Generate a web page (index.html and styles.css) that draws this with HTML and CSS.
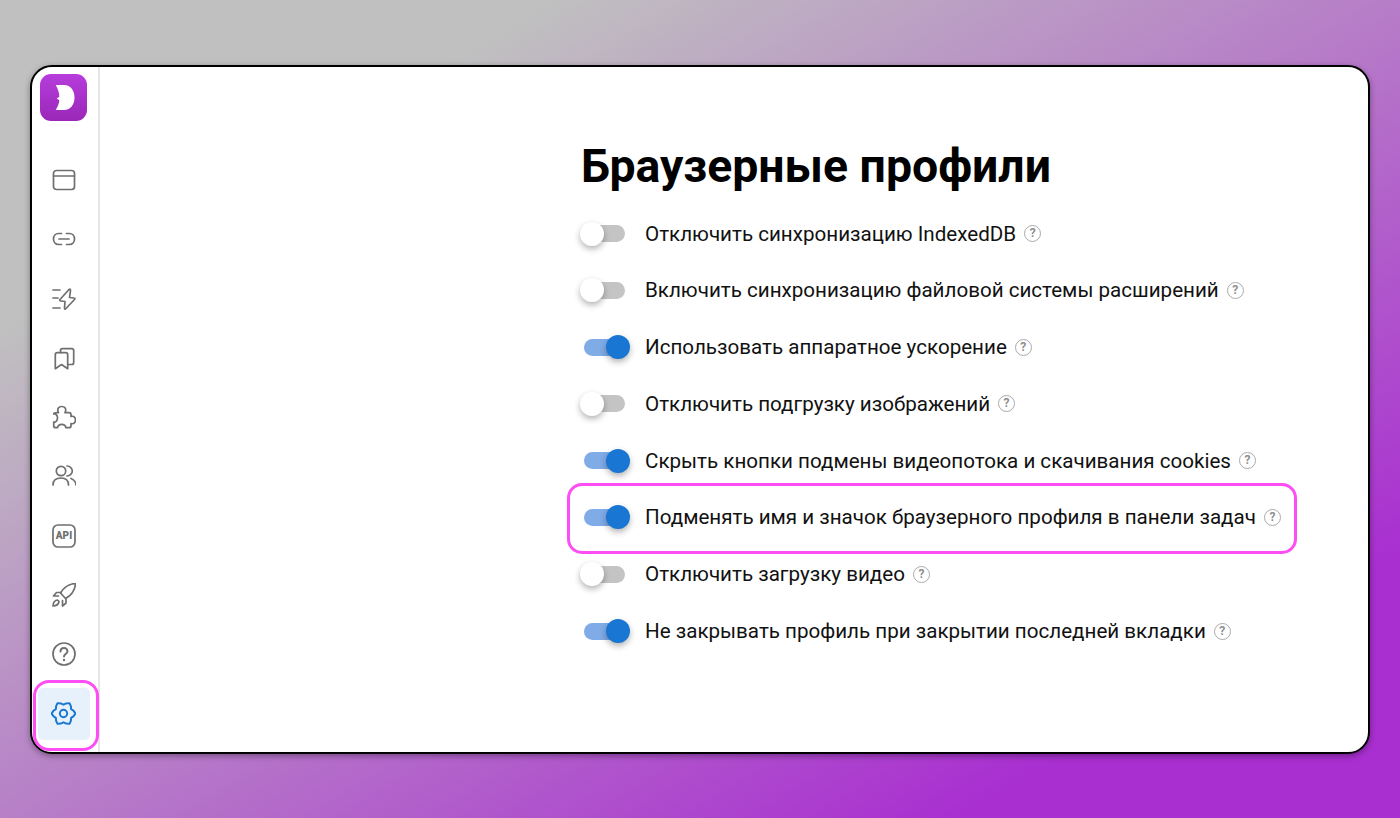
FILE: index.html
```html
<!DOCTYPE html>
<html lang="en">
<head>
  <meta charset="UTF-8">
  <title>Браузерные профили</title>
  <link rel="stylesheet" href="styles.css">
</head>
<body>

<div class="window">
  <div class="sidebar">
    <div class="logo">
      <svg width="47" height="47" viewBox="0 0 47 47"><path d="M15.700 11 H24 C31 11 34.500 17 34.500 23.500 C34.500 30 31 36 24 36 H15.700 C18 32 19.300 29 19.300 26.300 L16.700 24.500 L19.300 22.700 C19.300 19 18 15 15.700 11 Z" fill="#fff"/></svg>
    </div>
    <div class="nav">
      <div class="nav-item">
        <svg class="icon" viewBox="0 0 24 24"><rect x="1.500" y="2.500" width="21" height="19" rx="3"/><path d="M1.500 8 H22.500"/></svg>
      </div>
      <div class="nav-item">
        <svg class="icon" viewBox="0 0 24 24"><path d="M9.500 6.500 H6.500 C3.500 6.500 1.500 9 1.500 12 C1.500 15 3.500 17.500 6.500 17.500 H9.500"/><path d="M14.500 6.500 H17.500 C20.500 6.500 22.500 9 22.500 12 C22.500 15 20.500 17.500 17.500 17.500 H14.500"/><path d="M7 12 H17"/></svg>
      </div>
      <div class="nav-item">
        <svg class="icon" viewBox="0 0 24 24"><path d="M1 3 H8 M1 11 H6 M1 21 H8"/><path d="M17 2.500 L8 12.500 Q7 14 9 14 L13 14.500 L12.500 21 Q12.500 23 14 21.500 L22.500 12.500 Q23.500 11 22 11 L17.500 10.500 L18.500 3.500 Q18.500 1.500 17 2.500 Z"/></svg>
      </div>
      <div class="nav-item">
        <svg class="icon" viewBox="0 0 24 24"><path d="M8.500 6.700 V4.700 Q8.500 2.700 10.500 2.700 H19.700 Q21.700 2.700 21.700 4.700 V16.500 Q21.700 18.500 19.700 18.500 H16"/><path d="M5.300 6.700 H13.700 Q15.700 6.700 15.700 8.700 V22.700 L9.500 18.500 L3.300 22.700 V8.700 Q3.300 6.700 5.300 6.700 Z"/></svg>
      </div>
      <div class="nav-item">
        <svg class="icon" viewBox="0 0 24 24"><path d="M5 7.700 H6.500 C4.500 3.500 7 1.500 9.700 1.500 C12.500 1.500 15 3.500 13 7.700 H17 Q19 7.700 19 9.700 V11.500 C22 10.500 23.500 13 23.500 15 C23.500 17 22 19.500 19 18.500 V20.700 Q19 22.700 17 22.700 H14 C13.500 20.500 11.500 19.300 9.700 19.300 C8 19.300 6 20.500 5.500 22.700 H3.700 Q1.700 22.700 1.700 20.700 V17 C4 17.500 5.500 15 5.500 12.700 C5.500 10.500 4 8.500 1.700 9 Q2 7.700 5 7.700 Z"/></svg>
      </div>
      <div class="nav-item">
        <svg class="icon" viewBox="0 0 24 24"><circle cx="9" cy="7" r="4.700"/><path d="M1 21 C1 16.500 4 14 9 14 C14 14 16.500 16.500 16.500 21"/><path d="M15 2 C18 2 20.300 4.500 20.300 7 C20.300 9.500 18 12 15 12"/><path d="M19 14.500 C21.500 15.500 23.800 18 24 21"/></svg>
      </div>
      <div class="nav-item">
        <svg class="icon" viewBox="0 0 24 24"><rect x="1" y="1" width="22" height="22" rx="5"/><text class="api-text" x="12" y="15.200" text-anchor="middle">API</text></svg>
      </div>
      <div class="nav-item">
        <svg class="icon" viewBox="0 0 24 24"><path d="M23.500 .5 C16 1 11.500 5 8.500 10 L13.500 15.500 C19 12.500 23 8 23.500 .5 Z"/><path d="M9 9.500 H4.500 L1.500 13 H6.500"/><path d="M14 15.500 V20 L10.500 23 V17.500"/><path d="M5.500 17 C3 17.500 1 20 1 23 C4 23 6.500 21 7 18.500 Z"/></svg>
      </div>
      <div class="nav-item">
        <svg class="icon" viewBox="0 0 24 24"><circle cx="12" cy="12" r="11"/><path class="thick" d="M8.500 9.500 C8.500 7.500 10 6 12 6 C14 6 15.500 7.500 15.500 9.300 C15.500 12 12 12 12 14.500"/><circle class="dot" cx="12" cy="18" r="1.200"/></svg>
      </div>
      <div class="nav-item active">
        <svg class="icon gear" viewBox="0 0 24 24"><circle cx="12" cy="12" r="3.500"/><path d="M23.500 12 L21.660 14.590 L19.360 16.250 L19.070 19.070 L17.750 21.960 L14.590 21.660 L12 20.500 L9.410 21.660 L6.250 21.960 L4.930 19.070 L4.640 16.250 L2.340 14.590 L.5 12 L2.340 9.410 L4.640 7.750 L4.930 4.930 L6.250 2.040 L9.410 2.340 L12 3.500 L14.590 2.340 L17.750 2.040 L19.070 4.930 L19.360 7.750 L21.660 9.410 Z"/></svg>
        <div class="highlight highlight-nav"></div>
      </div>
    </div>
  </div>

  <div class="content">
    <h1>Браузерные профили</h1>
    <div class="option"><span class="switch"></span><span class="label">Отключить синхронизацию IndexedDB</span><span class="hint">?</span></div>
    <div class="option"><span class="switch"></span><span class="label">Включить синхронизацию файловой системы расширений</span><span class="hint">?</span></div>
    <div class="option"><span class="switch on"></span><span class="label">Использовать аппаратное ускорение</span><span class="hint">?</span></div>
    <div class="option"><span class="switch"></span><span class="label">Отключить подгрузку изображений</span><span class="hint">?</span></div>
    <div class="option"><span class="switch on"></span><span class="label">Скрыть кнопки подмены видеопотока и скачивания cookies</span><span class="hint">?</span></div>
    <div class="option"><span class="switch on"></span><span class="label">Подменять имя и значок браузерного профиля в панели задач</span><span class="hint">?</span><div class="highlight highlight-row"></div></div>
    <div class="option"><span class="switch"></span><span class="label">Отключить загрузку видео</span><span class="hint">?</span></div>
    <div class="option"><span class="switch on"></span><span class="label">Не закрывать профиль при закрытии последней вкладки</span><span class="hint">?</span></div>
  </div>
</div>

</body>
</html>
```

FILE: styles.css
```css
html, body {
  height: 100%;
}

body {
  margin: 0;
  box-sizing: border-box;
  padding: 65px 30px 64px;
  font-family: Roboto, "Liberation Sans", sans-serif;
  background: linear-gradient(149deg, #c0c0c0 20%, #b67ac8 52%, #a92fd0 84%);
  overflow: hidden;
}

.window {
  box-sizing: border-box;
  height: 689px;
  display: flex;
  background-color: #fff;
  border: 2px solid #000;
  border-radius: 22px;
  box-shadow: 0 2px 6px rgba(0,0,0,0.35);
}

.sidebar {
  box-sizing: border-box;
  width: 68px;
  flex-shrink: 0;
  border-right: 2px solid #e6e6e6;
  display: flex;
  flex-direction: column;
  align-items: center;
  padding: 7px 3px 0 0;
}

.logo {
  width: 47px;
  height: 47px;
  border-radius: 11px;
  background: linear-gradient(to bottom, #b63ddc, #9a27b8);
}

.logo svg {
  display: block;
}

.nav {
  display: flex;
  flex-direction: column;
  align-items: center;
  margin-top: 33px;
  gap: 7.300px;
}

.nav-item {
  position: relative;
  width: 52px;
  height: 52px;
  display: flex;
  align-items: center;
  justify-content: center;
  border-radius: 5px;
  color: #6f6f6f;
}

.nav-item.active {
  background-color: #e6f1fb;
  color: #1976d2;
}

.icon {
  width: 24px;
  height: 24px;
  fill: none;
  stroke: currentColor;
  stroke-width: 1.700;
  stroke-linecap: round;
  stroke-linejoin: round;
}

.icon .thick {
  stroke-width: 2;
}

.icon .dot {
  fill: currentColor;
  stroke: none;
}

.icon.gear {
  width: 25px;
  height: 25px;
  stroke-width: 1.900;
}

.api-text {
  font-family: Roboto, sans-serif;
  font-size: 10px;
  font-weight: 900;
  fill: currentColor;
  stroke: none;
}

.highlight {
  position: absolute;
  box-sizing: border-box;
  border: 3px solid #ff4df5;
  pointer-events: none;
}

.highlight-nav {
  left: -5px;
  top: -8px;
  width: 66px;
  height: 71px;
  border-radius: 16px;
}

.highlight-row {
  left: -14px;
  top: -11px;
  width: 730px;
  height: 71px;
  border-radius: 15px;
}

.content {
  flex: 1;
  padding: 69px 0 0 481px;
}

h1 {
  margin: 0 0 14px;
  font-size: 46.400px;
  line-height: 60px;
  font-weight: 700;
  color: #000;
}

.option {
  position: relative;
  height: 47px;
  margin-bottom: 9.800px;
  display: flex;
  align-items: center;
  font-size: 20.600px;
  color: #111;
}

.switch {
  position: relative;
  width: 41px;
  height: 17px;
  margin-left: 3px;
  margin-right: 20px;
  flex-shrink: 0;
  border-radius: 9px;
  background-color: #c4c4c4;
}

.switch::after {
  content: "";
  position: absolute;
  left: -4px;
  top: -3.500px;
  width: 24px;
  height: 24px;
  border-radius: 50%;
  background-color: #fff;
  box-shadow: 0 3px 6px rgba(0,0,0,0.3);
}

.switch.on {
  background-color: #7fabe6;
}

.switch.on::after {
  left: 22px;
  background-color: #1976d2;
}

.hint {
  box-sizing: border-box;
  width: 17px;
  height: 17px;
  margin-left: 8px;
  border: 1.500px solid #aaa;
  border-radius: 50%;
  color: #8f8f8f;
  font-size: 12px;
  font-weight: 700;
  line-height: 14px;
  text-align: center;
}
```
